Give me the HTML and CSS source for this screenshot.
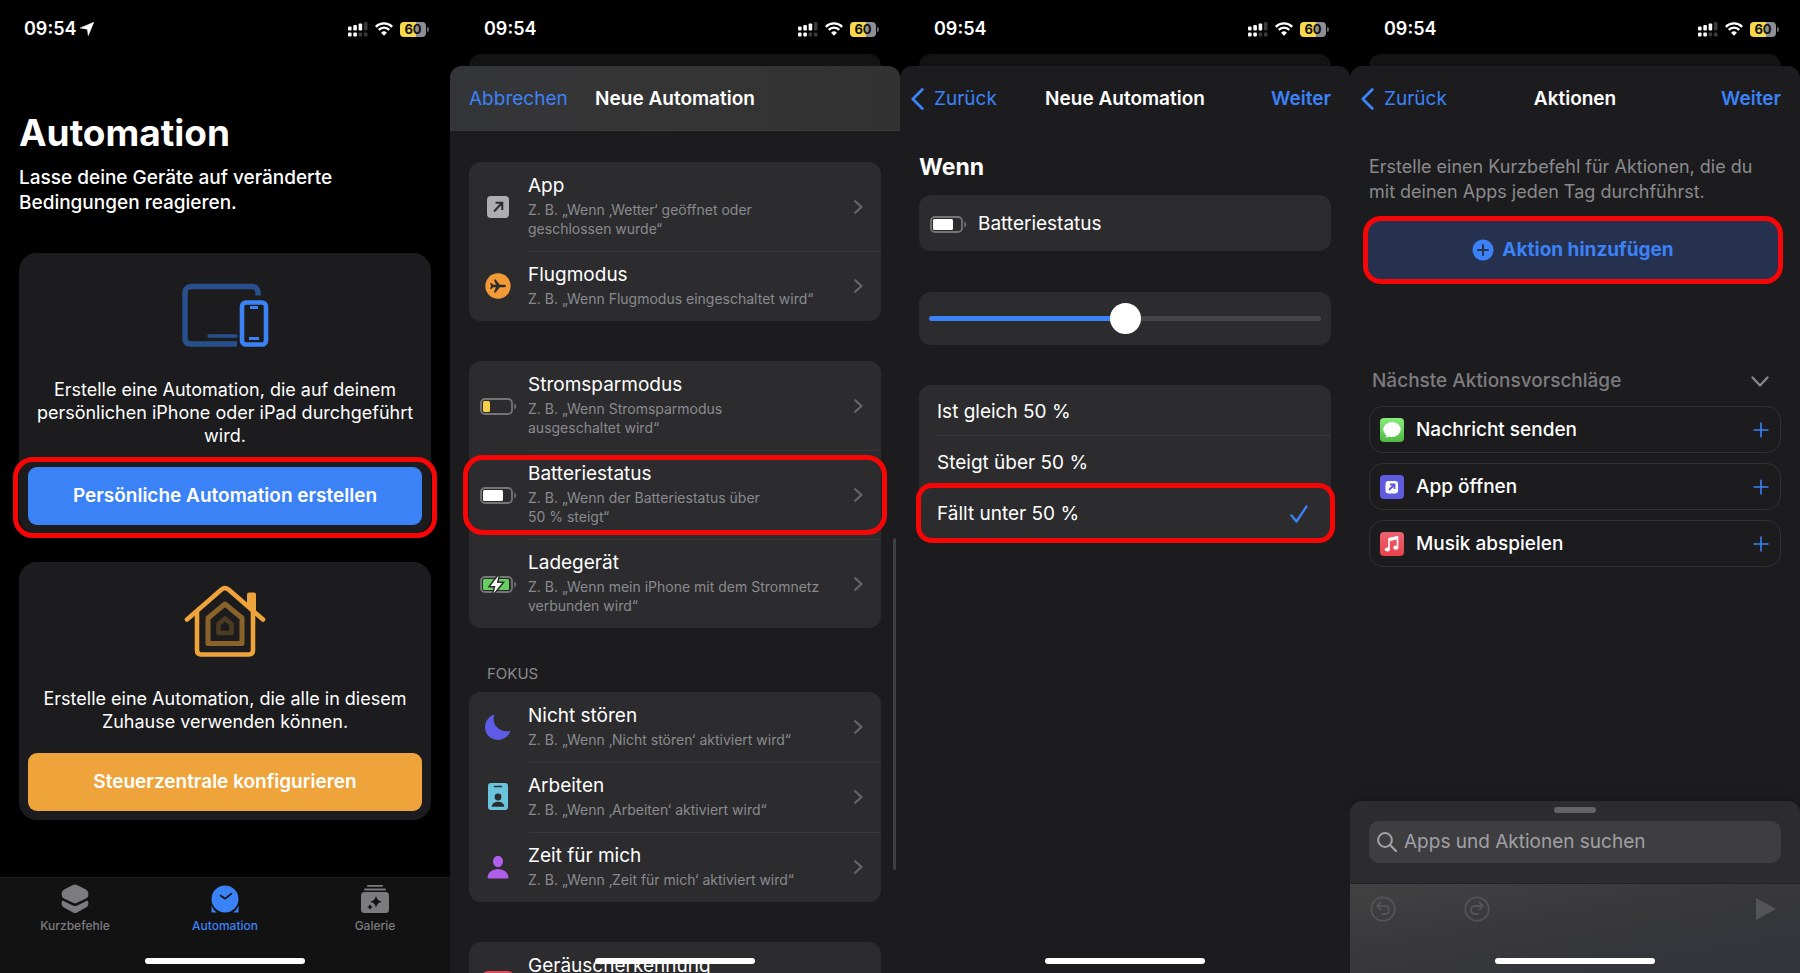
FILE: index.html
```
<!DOCTYPE html>
<html lang="de">
<head>
    <meta charset="UTF-8">
    <meta name="viewport" content="width=device-width, initial-scale=1.0">
    <title>Automation</title>
    <link rel="stylesheet" href="styles.css">
</head>
<body>
    <!-- shared icons -->
    <svg class="defs" aria-hidden="true">
        <symbol id="i-signal" viewBox="0 0 20 15">
            <g fill="#fff">
                <rect x="0" y="4.500" width="3.600" height="4" rx="1"/>
                <rect x="5.300" y="3" width="3.600" height="5.500" rx="1"/>
                <rect x="10.600" y="1.500" width="3.600" height="7" rx="1"/>
                <rect x="0" y="10.500" width="3.600" height="4" rx="1"/>
                <rect x="5.300" y="10.500" width="3.600" height="4" rx="1"/>
            </g>
            <g fill="#3a3a3c">
                <rect x="15.900" y="0" width="3.600" height="8.500" rx="1"/>
                <rect x="10.600" y="10.500" width="3.600" height="4" rx="1"/>
                <rect x="15.900" y="10.500" width="3.600" height="4" rx="1"/>
            </g>
        </symbol>
        <symbol id="i-wifi" viewBox="0 0 18 14">
            <path d="M.8 4.800A11.600 11.600 0 0 1 17.200 4.800" fill="none" stroke="#fff" stroke-width="2.400"/>
            <path d="M3.700 7.900A7.500 7.500 0 0 1 14.300 7.900" fill="none" stroke="#fff" stroke-width="2.300"/>
            <path d="M9 13.800L6.100 10.800a4.100 4.100 0 0 1 5.800 0z" fill="#fff"/>
        </symbol>
        <symbol id="i-chevron" viewBox="0 0 9 14">
            <path d="M1.200 1.200L7.500 7l-6.300 5.800" fill="none" stroke="currentColor" stroke-width="2.200" stroke-linecap="round" stroke-linejoin="round"/>
        </symbol>
        <symbol id="i-back" viewBox="0 0 13 22">
            <path d="M11.300 1.600L1.800 11l9.500 9.400" fill="none" stroke="currentColor" stroke-width="2.800" stroke-linecap="round" stroke-linejoin="round"/>
        </symbol>
        <symbol id="i-battery" viewBox="0 0 37 17">
            <rect x="1" y="1" width="31" height="15" rx="4" fill="none" stroke="#757578" stroke-width="1.800"/>
            <path d="M34.300 5.500c2.400.8 2.400 5.200 0 6z" fill="#757578"/>
        </symbol>
        <symbol id="i-plus" viewBox="0 0 16 16">
            <path d="M8 .5v15M.5 8h15" fill="none" stroke="currentColor" stroke-width="1.600"/>
        </symbol>
    </svg>

    <main class="screens">
        <!-- Automation overview -->
        <section class="screen">
            <div class="status status-home">
                <span class="time">09:54</span>
                <svg class="location" viewBox="0 0 14 14"><path d="M13.800.2L8.300 13.600 7.300 7.200.2 6z" fill="#fff" stroke="#fff" stroke-width=".5" stroke-linejoin="round"/></svg>
                <div class="indicators">
                    <svg class="signal"><use href="#i-signal"/></svg>
                    <svg class="wifi"><use href="#i-wifi"/></svg>
                    <span class="level">60</span>
                </div>
            </div>
            <div class="overview">
                <h1>Automation</h1>
                <p class="lead">Lasse deine Geräte auf veränderte<br>Bedingungen reagieren.</p>
                <article class="card">
                    <svg class="card-icon" viewBox="0 0 88 80">
                        <path d="M77 22.500v-3a6 6 0 0 0-6-6H10a6 6 0 0 0-6 6v45.500q0 6 6 6h46" fill="none" stroke="#28508c" stroke-width="5.500"/>
                        <path d="M28 63h27" stroke="#28508c" stroke-width="3.500" stroke-linecap="round"/>
                        <rect x="61" y="29.500" width="24" height="42" rx="4" fill="none" stroke="#3b82f7" stroke-width="4.600"/>
                        <path d="M69 34.500h8M68 65.500h10" stroke="#3b82f7" stroke-width="2.800"/>
                    </svg>
                    <p>Erstelle eine Automation, die auf deinem<br>persönlichen iPhone oder iPad durchgeführt<br>wird.</p>
                    <button type="button" class="big blue marked">Persönliche Automation erstellen</button>
                </article>
                <article class="card">
                    <svg class="card-icon" viewBox="0 0 88 80">
                        <g fill="none" stroke-linejoin="round" stroke-linecap="round">
                            <path d="M6 37.500L40.500 7.500Q44 4.800 47.500 7.500L82 37.500" stroke="#efa33b" stroke-width="4.600"/>
                            <path d="M16 30v38q0 4.500 4 4.500h48q4 0 4-4.500V30" stroke="#efa33b" stroke-width="4.600"/>
                            <path d="M44 22L27 36v25.500h34V36z" stroke="#8a632a" stroke-width="5"/>
                            <path d="M44 36.500l-6.500 5.500V51h13V42z" stroke="#4d3b21" stroke-width="4.600"/>
                        </g>
                        <path d="M66 12.500q0-2 2-2h5q2 0 2 2V34L66 26z" fill="#efa33b"/>
                    </svg>
                    <p>Erstelle eine Automation, die alle in diesem<br>Zuhause verwenden können.</p>
                    <button type="button" class="big orange">Steuerzentrale konfigurieren</button>
                </article>
            </div>
            <nav class="tabs">
                <a href="#kurzbefehle">
                    <svg viewBox="0 0 30 30" fill="currentColor"><path d="M13 1Q15 0 17 1l9 4.500q2.500 1.500 2.500 4.500t-2.500 4.500l-9 4.200q-2 1-4 0l-9-4.200Q1.500 13 1.500 10T4 5.500z"/><path d="M2.600 16.500l9.600 4.700q2.800 1.400 5.600 0l9.600-4.700q1.600 1.800.9 4.300-.5 1.700-2.300 2.700l-9 5q-2 1-4 0l-9-5q-1.800-1-2.300-2.700-.7-2.500.9-4.300z"/></svg>
                    Kurzbefehle
                </a>
                <a href="#automation" class="active">
                    <svg viewBox="0 0 30 30" fill="currentColor"><circle cx="15" cy="15" r="13.500"/><path d="M1.500 21.500q1.500 4.500 5.500 7H1.500zM28.500 21.500q-1.500 4.500-5.500 7h5.500z"/><path d="M10.500 11.500l4.500 3.200 6.500-5" fill="none" stroke="#121212" stroke-width="1.600" stroke-linecap="round"/></svg>
                    Automation
                </a>
                <a href="#galerie">
                    <svg viewBox="0 0 30 30" fill="currentColor"><rect x="7" y="1" width="16" height="1.800" rx=".9"/><rect x="4" y="4.500" width="22" height="2" rx="1"/><rect x="1" y="8" width="28" height="21" rx="3.500"/><path d="M16 11.500q.8 5.500 6 6.300-5.200.8-6 6.300-.8-5.500-6-6.300 5.200-.8 6-6.300zM10 20q.4 2.600 2.800 3-2.400.4-2.800 3-.4-2.600-2.800-3 2.400-.4 2.800-3z" fill="#121212"/></svg>
                    Galerie
                </a>
            </nav>
            <div class="home-bar"></div>
        </section>

        <!-- Trigger list -->
        <section class="screen modal">
            <div class="status">
                <span class="time">09:54</span>
                <div class="indicators">
                    <svg class="signal"><use href="#i-signal"/></svg>
                    <svg class="wifi"><use href="#i-wifi"/></svg>
                    <span class="level">60</span>
                </div>
            </div>
            <div class="sheet">
                <header class="navbar raised">
                    <a href="#abbrechen">Abbrechen</a>
                    <h2>Neue Automation</h2>
                </header>
                <div class="triggers">
                    <ul class="group">
                        <li><a href="#app" class="row">
                            <svg class="icon" viewBox="0 0 38 28"><rect x="8" y="3" width="22" height="22" rx="4" fill="#aeaeb2"/><path d="M15 18.500l8-8.500M16.500 9.700H23.300V17" fill="none" stroke="#2c2c2e" stroke-width="2"/></svg>
                            <span class="texts"><b>App</b><small>Z. B. „Wenn ‚Wetter‘ geöffnet oder<br>geschlossen wurde“</small></span>
                            <svg class="chevron"><use href="#i-chevron"/></svg>
                        </a></li>
                        <li><a href="#flugmodus" class="row">
                            <svg class="icon" viewBox="0 0 38 28"><circle cx="19" cy="14" r="12.700" fill="#f19a37"/><path d="M27 14q0-1.200-2.200-1.200h-4L16.600 7.500h-1.700l2 5.300h-2.700L12.300 11h-1.200L12 14l-.9 3h1.200l1.900-1.800h2.700l-2 5.300h1.700l4.200-5.300h4Q27 15.200 27 14z" fill="#2c2c2e"/></svg>
                            <span class="texts"><b>Flugmodus</b><small>Z. B. „Wenn Flugmodus eingeschaltet wird“</small></span>
                            <svg class="chevron"><use href="#i-chevron"/></svg>
                        </a></li>
                    </ul>
                    <ul class="group">
                        <li><a href="#stromsparmodus" class="row">
                            <svg class="icon" viewBox="0 0 38 28"><use href="#i-battery" x="1" y="6" width="37" height="17"/><rect x="4" y="9" width="7" height="11" rx="1.500" fill="#f7ce46"/></svg>
                            <span class="texts"><b>Stromsparmodus</b><small>Z. B. „Wenn Stromsparmodus<br>ausgeschaltet wird“</small></span>
                            <svg class="chevron"><use href="#i-chevron"/></svg>
                        </a></li>
                        <li><a href="#batteriestatus" class="row marked">
                            <svg class="icon" viewBox="0 0 38 28"><use href="#i-battery" x="1" y="6" width="37" height="17"/><rect x="4" y="9" width="20" height="11" rx="1.500" fill="#fff"/></svg>
                            <span class="texts"><b>Batteriestatus</b><small>Z. B. „Wenn der Batteriestatus über<br>50 % steigt“</small></span>
                            <svg class="chevron"><use href="#i-chevron"/></svg>
                        </a></li>
                        <li><a href="#ladegeraet" class="row">
                            <svg class="icon" viewBox="0 0 38 28"><use href="#i-battery" x="1" y="6" width="37" height="17"/><rect x="4" y="9" width="26" height="11" rx="1.500" fill="#65cf60"/><path d="M19.500 5.500L11.500 16h5l-2 7.500 8.500-10.500h-5.200z" fill="#fff" stroke="#2c2c2e" stroke-width="3" paint-order="stroke"/></svg>
                            <span class="texts"><b>Ladegerät</b><small>Z. B. „Wenn mein iPhone mit dem Stromnetz<br>verbunden wird“</small></span>
                            <svg class="chevron"><use href="#i-chevron"/></svg>
                        </a></li>
                    </ul>
                    <h3>FOKUS</h3>
                    <ul class="group">
                        <li><a href="#nicht-stoeren" class="row">
                            <svg class="icon" viewBox="0 0 38 28"><path d="M15.500 1.500A13 13 0 1 0 31.500 17.500 12.500 12.500 0 0 1 15.500 1.500z" fill="#5e5ce6"/></svg>
                            <span class="texts"><b>Nicht stören</b><small>Z. B. „Wenn ‚Nicht stören‘ aktiviert wird“</small></span>
                            <svg class="chevron"><use href="#i-chevron"/></svg>
                        </a></li>
                        <li><a href="#arbeiten" class="row">
                            <svg class="icon" viewBox="0 0 38 28"><rect x="9" y="0" width="20" height="27" rx="3" fill="#6ac4dc"/><path d="M15.500 3.500h7" stroke="#2c2c2e" stroke-width="1.600" stroke-linecap="round"/><circle cx="19" cy="14" r="3.400" fill="#2c2c2e"/><path d="M12.500 23.800q1-5 6.500-5t6.500 5z" fill="#2c2c2e"/></svg>
                            <span class="texts"><b>Arbeiten</b><small>Z. B. „Wenn ‚Arbeiten‘ aktiviert wird“</small></span>
                            <svg class="chevron"><use href="#i-chevron"/></svg>
                        </a></li>
                        <li><a href="#zeit-fuer-mich" class="row">
                            <svg class="icon" viewBox="0 0 38 28"><ellipse cx="19" cy="8.500" rx="5" ry="5.700" fill="#af5fe9"/><path d="M8.500 24q0-3 3-5.500t7.500-2.500 7.500 2.500 3 5.500q0 1.500-1.500 1.500h-18q-1.500 0-1.500-1.500z" fill="#af5fe9"/></svg>
                            <span class="texts"><b>Zeit für mich</b><small>Z. B. „Wenn ‚Zeit für mich‘ aktiviert wird“</small></span>
                            <svg class="chevron"><use href="#i-chevron"/></svg>
                        </a></li>
                    </ul>
                    <ul class="group">
                        <li><a href="#geraeuscherkennung" class="row tall">
                            <svg class="icon" viewBox="0 0 38 28"><rect x="3" y="-2" width="32" height="32" rx="6" fill="#ea445a"/></svg>
                            <span class="texts"><b>Geräuscherkennung</b></span>
                            <svg class="chevron"><use href="#i-chevron"/></svg>
                        </a></li>
                    </ul>
                </div>
            </div>
            <div class="scrollbar"></div>
            <div class="home-bar"></div>
        </section>

        <!-- Battery condition -->
        <section class="screen modal">
            <div class="status">
                <span class="time">09:54</span>
                <div class="indicators">
                    <svg class="signal"><use href="#i-signal"/></svg>
                    <svg class="wifi"><use href="#i-wifi"/></svg>
                    <span class="level">60</span>
                </div>
            </div>
            <div class="sheet">
                <header class="navbar">
                    <a href="#zurueck" class="back"><svg><use href="#i-back"/></svg>Zurück</a>
                    <h2>Neue Automation</h2>
                    <a href="#weiter" class="next">Weiter</a>
                </header>
                <form class="condition">
                    <h1>Wenn</h1>
                    <div class="group current">
                        <svg class="icon" viewBox="0 0 38 28"><use href="#i-battery" x="1" y="6" width="37" height="17"/><rect x="4" y="9" width="20" height="11" rx="1.500" fill="#fff"/></svg>
                        Batteriestatus
                    </div>
                    <div class="group slider">
                        <input type="range" min="0" max="100" value="50" aria-label="Batteriestatus">
                    </div>
                    <div class="group options">
                        <label><input type="radio" name="when">Ist gleich 50 %</label>
                        <label><input type="radio" name="when">Steigt über 50 %</label>
                        <label class="marked"><input type="radio" name="when" checked>Fällt unter 50 %
                            <svg class="check" viewBox="0 0 18 18"><path d="M1.500 10.500l5 6L16.500 1.500" fill="none" stroke="currentColor" stroke-width="2.300" stroke-linecap="round" stroke-linejoin="round"/></svg>
                        </label>
                    </div>
                </form>
            </div>
            <div class="home-bar"></div>
        </section>

        <!-- Actions -->
        <section class="screen modal">
            <div class="status">
                <span class="time">09:54</span>
                <div class="indicators">
                    <svg class="signal"><use href="#i-signal"/></svg>
                    <svg class="wifi"><use href="#i-wifi"/></svg>
                    <span class="level">60</span>
                </div>
            </div>
            <div class="sheet">
                <header class="navbar">
                    <a href="#zurueck" class="back"><svg><use href="#i-back"/></svg>Zurück</a>
                    <h2>Aktionen</h2>
                    <a href="#weiter" class="next">Weiter</a>
                </header>
                <div class="actions">
                    <p>Erstelle einen Kurzbefehl für Aktionen, die du<br>mit deinen Apps jeden Tag durchführst.</p>
                    <button type="button" class="add">
                        <svg viewBox="0 0 22 22"><circle cx="11" cy="11" r="10.500" fill="currentColor"/><path d="M11 6v10M6 11h10" stroke="#26314f" stroke-width="2" stroke-linecap="round"/></svg>
                        Aktion hinzufügen
                    </button>
                    <div class="suggest-head">
                        <h3>Nächste Aktionsvorschläge</h3>
                        <svg viewBox="0 0 18 11"><path d="M1.500 1.500L9 9.500l7.500-8" fill="none" stroke="currentColor" stroke-width="2.200" stroke-linecap="round" stroke-linejoin="round"/></svg>
                    </div>
                    <button type="button" class="suggestion">
                        <svg class="app" viewBox="0 0 24 24">
                            <defs><linearGradient id="g-msg" x2="0" y2="1"><stop stop-color="#86ee78"/><stop offset="1" stop-color="#51b845"/></linearGradient></defs>
                            <rect width="24" height="24" rx="4" fill="url(#g-msg)"/><ellipse cx="12" cy="11.500" rx="8.700" ry="7.500" fill="#fff"/><path d="M6.500 15.500q.5 2.500-1 4 3 0 5-2z" fill="#fff"/>
                        </svg>
                        Nachricht senden
                        <svg class="plus"><use href="#i-plus"/></svg>
                    </button>
                    <button type="button" class="suggestion">
                        <svg class="app" viewBox="0 0 24 24"><rect width="24" height="24" rx="4" fill="#5e5bdd"/><rect x="5.500" y="6" width="12.500" height="12.500" rx="3" fill="#fff"/><path d="M9 15l5-5M10 9.500h4.500V14" fill="none" stroke="#5e5bdd" stroke-width="1.900"/></svg>
                        App öffnen
                        <svg class="plus"><use href="#i-plus"/></svg>
                    </button>
                    <button type="button" class="suggestion">
                        <svg class="app" viewBox="0 0 24 24">
                            <defs><linearGradient id="g-music" x2="0" y2="1"><stop stop-color="#ec6373"/><stop offset="1" stop-color="#e8424c"/></linearGradient></defs>
                            <rect width="24" height="24" rx="4" fill="url(#g-music)"/><path d="M9 17V7l8.500-2v10.500" fill="none" stroke="#fff" stroke-width="1.600"/><path d="M9 6l8.500-2v3.300L9 9.300z" fill="#fff"/><ellipse cx="7.300" cy="17.500" rx="2.600" ry="2.100" fill="#fff"/><ellipse cx="15.800" cy="15.700" rx="2.600" ry="2.100" fill="#fff"/>
                        </svg>
                        Musik abspielen
                        <svg class="plus"><use href="#i-plus"/></svg>
                    </button>
                </div>
                <footer class="drawer">
                    <div class="grabber"></div>
                    <label class="search">
                        <svg viewBox="0 0 20 20"><circle cx="8" cy="8" r="6.900" fill="none" stroke="currentColor" stroke-width="2"/><path d="M13 13l6 6" stroke="currentColor" stroke-width="2.300" stroke-linecap="round"/></svg>
                        <input type="search" placeholder="Apps und Aktionen suchen" aria-label="Apps und Aktionen suchen">
                    </label>
                    <div class="toolbar">
                        <button type="button" aria-label="Widerrufen"><svg viewBox="0 0 26 26" fill="none" stroke="currentColor" stroke-width="1.800"><circle cx="13" cy="13" r="11.700"/><path d="M10.500 6.500L7 10l3.500 3.500M7.500 10H15q4 0 4 4t-4 4h-3" stroke-linecap="round" stroke-linejoin="round"/></svg></button>
                        <button type="button" aria-label="Wiederholen"><svg viewBox="0 0 26 26" fill="none" stroke="currentColor" stroke-width="1.800"><circle cx="13" cy="13" r="11.700"/><path d="M15.500 6.500L19 10l-3.500 3.500M18.500 10H11q-4 0-4 4t4 4h3" stroke-linecap="round" stroke-linejoin="round"/></svg></button>
                        <button type="button" class="play" aria-label="Ausführen"><svg viewBox="0 0 20 26"><path d="M0 2v22l20-11z" fill="currentColor"/></svg></button>
                    </div>
                </footer>
            </div>
            <div class="home-bar"></div>
        </section>
    </main>
</body>
</html>
```

FILE: styles.css
```
* {
    box-sizing: border-box;
    margin: 0;
    padding: 0;
}
body {
    background-color: #000;
    color: #fff;
    font-family: Inter, "Liberation Sans", sans-serif;
    font-size: 19px;
    line-height: 24px;
}
a {
    color: #3b82f7;
    text-decoration: none;
}
button, input {
    font: inherit;
    color: inherit;
    border: none;
    background: none;
}
ul {
    list-style: none;
}
.defs {
    position: absolute;
    width: 0;
    height: 0;
}
.screens {
    display: grid;
    grid-template-columns: repeat(4, 1fr);
    height: 100vh;
}
.screen {
    position: relative;
    display: flex;
    flex-direction: column;
    min-width: 0;
    min-height: 0;
    overflow: hidden;
}

/* status bar */
.status {
    display: flex;
    align-items: center;
    flex: none;
    height: 54px;
    padding: 4px 21px 0 34px;
}
.status-home {
    padding-left: 24px;
}
.time {
    font-size: 18px;
    font-weight: 600;
}
.location {
    width: 14px;
    height: 14px;
    margin-left: 4px;
}
.indicators {
    display: flex;
    align-items: center;
    gap: 7px;
    margin-left: auto;
}
.signal {
    width: 20px;
    height: 15px;
}
.wifi {
    width: 18px;
    height: 14px;
}
.level {
    position: relative;
    width: 26px;
    margin-right: 3px;
    border-radius: 4px;
    background: linear-gradient(90deg, #f7d94c 60%, #8e8e93 60%);
    color: #111;
    font-size: 13px;
    font-weight: 700;
    line-height: 15px;
    text-align: center;
}
.level::after {
    content: "";
    position: absolute;
    left: 27px;
    top: 5px;
    width: 2px;
    height: 5px;
    border-radius: 0 2px 2px 0;
    background: #6c6c70;
}
.home-bar {
    position: absolute;
    left: 50%;
    bottom: 9px;
    width: 160px;
    height: 6px;
    margin-left: -80px;
    border-radius: 3px;
    background: #fff;
}

/* red frame round the control to tap */
.marked {
    position: relative;
}
.marked::after {
    content: "";
    position: absolute;
    border: 5px solid #f60606;
    border-radius: 20px;
    pointer-events: none;
}
.big.marked::after {
    inset: -10px -15px -13px;
}
.row.marked::after {
    inset: 5px -6px 4px;
    z-index: 1;
}
.options .marked::after {
    inset: -4px -4px -5px -3px;
    border-radius: 16px;
}

/* overview */
.overview {
    flex: 1;
    padding: 57px 19px 0;
}
.overview h1 {
    font-size: 37px;
    line-height: 44px;
}
.lead {
    margin: 10px 0 38px;
    font-size: 19px;
    font-weight: 500;
    line-height: 25px;
}
.card {
    display: flex;
    flex-direction: column;
    align-items: center;
    margin-bottom: 28px;
    padding: 20px 9px 9px;
    border-radius: 18px;
    background: #1c1c1e;
    text-align: center;
}
.card-icon {
    width: 88px;
    height: 80px;
    margin-bottom: 25px;
}
.card p {
    font-size: 18px;
    line-height: 23px;
    white-space: nowrap;
}
.big {
    align-self: stretch;
    height: 58px;
    margin-top: 20px;
    border-radius: 9px;
    font-weight: 600;
}
.blue {
    background: #3b82f7;
}
.orange {
    background: #efa33b;
}
.tabs {
    display: flex;
    flex: none;
    height: 96px;
    padding-top: 6px;
    border-top: 1px solid #1f1f20;
    background: #121212;
}
.tabs a {
    display: flex;
    flex: 1;
    flex-direction: column;
    align-items: center;
    color: #7c7c80;
    font-size: 12px;
    font-weight: 500;
    line-height: 24px;
}
.tabs a.active {
    color: #3b82f7;
}
.tabs svg {
    width: 30px;
    height: 30px;
}

/* modal sheets */
.modal::before {
    content: "";
    position: absolute;
    top: 54px;
    left: 19px;
    right: 19px;
    height: 30px;
    border-radius: 12px;
    background: #131314;
}
.sheet {
    position: relative;
    display: flex;
    flex: 1;
    flex-direction: column;
    min-height: 0;
    margin-top: 12px;
    border-radius: 12px 12px 0 0;
    background: #1c1c1e;
    overflow: hidden;
}
.navbar {
    display: grid;
    grid-template-columns: 1fr auto 1fr;
    align-items: center;
    flex: none;
    height: 65px;
    padding: 0 19px;
}
.raised {
    background: linear-gradient(90deg, #343538, #353536 30%, #323233);
    box-shadow: inset 0 -1px #3a3a3b;
}
.navbar h2 {
    font-size: 19px;
    font-weight: 600;
}
.next {
    justify-self: end;
    font-weight: 600;
}
.back {
    display: flex;
    align-items: center;
    gap: 10px;
    margin-left: -8px;
}
.back svg {
    width: 13px;
    height: 22px;
}
.group {
    border-radius: 12px;
    background: #2c2c2e;
}
.icon {
    flex: none;
    width: 38px;
    height: 28px;
    overflow: visible;
}

/* trigger list */
.triggers {
    padding: 31px 19px 0;
}
.triggers .group {
    margin-bottom: 40px;
}
.triggers h3 {
    margin: -6px 18px 6px;
    color: #8a8a8e;
    font-size: 15px;
    font-weight: 400;
}
.row {
    display: flex;
    align-items: center;
    padding: 0 18px 0 10px;
    color: #fff;
}
.tall {
    min-height: 89px;
}
.texts {
    display: flex;
    flex: 1;
    flex-direction: column;
    align-self: flex-start;
    gap: 2px;
    margin-left: 11px;
    padding: 12px 0 13px;
    white-space: nowrap;
}
.texts b {
    font-weight: 400;
}
.texts small {
    color: #8a8a8e;
    font-size: 14px;
    line-height: 19px;
}
.group li + li {
    background: linear-gradient(#38383a, #38383a) 60px 0 / 100% 1px no-repeat;
}
.chevron {
    width: 9px;
    height: 14px;
    color: #66666a;
}
.scrollbar {
    position: absolute;
    top: 538px;
    right: 4px;
    width: 3px;
    height: 332px;
    border-radius: 2px;
    background: #3f3f41;
}

/* condition form */
.condition {
    padding: 21px 19px 0;
}
.condition h1 {
    margin-bottom: 13px;
    font-size: 23px;
    line-height: 30px;
}
.current {
    display: flex;
    align-items: center;
    gap: 11px;
    height: 56px;
    padding: 2px 10px 0;
}
.slider {
    display: flex;
    align-items: center;
    height: 53px;
    margin: 41px 0 40px;
    padding: 0 10px;
}
.slider input {
    width: 100%;
    height: 31px;
    appearance: none;
}
.slider input::-webkit-slider-runnable-track {
    height: 5px;
    border-radius: 3px;
    background: linear-gradient(90deg, #3b82f7 50%, #464648 50%);
}
.slider input::-webkit-slider-thumb {
    width: 31px;
    height: 31px;
    margin-top: -13px;
    border-radius: 50%;
    background: #fff;
    appearance: none;
}
.options label {
    display: flex;
    align-items: center;
    height: 51px;
    padding: 2px 23px 0 18px;
    background: linear-gradient(#38383a, #38383a) 18px 100% / 100% 1px no-repeat;
}
.options label:last-child {
    background: none;
}
.options input {
    width: 0;
    height: 0;
    appearance: none;
}
.check {
    width: 18px;
    height: 18px;
    margin-left: auto;
    color: #3b82f7;
}

/* actions */
.actions {
    flex: 1;
    padding: 23px 19px 0;
}
.actions p {
    color: #8a8a8e;
    font-size: 18px;
    line-height: 25px;
    white-space: nowrap;
}
.add {
    display: flex;
    align-items: center;
    justify-content: center;
    gap: 8px;
    width: calc(100% + 8px);
    height: 68px;
    margin: 12px 0 85px -6px;
    border: 5px solid #f60606;
    border-radius: 18px;
    background: #26314f;
    color: #3b82f7;
    font-weight: 700;
}
.add svg {
    width: 22px;
    height: 22px;
}
.suggest-head {
    display: flex;
    align-items: center;
    justify-content: space-between;
    margin-bottom: 13px;
    padding: 0 12px 0 3px;
    color: #7c7c80;
}
.suggest-head h3 {
    font-size: 19px;
    font-weight: 500;
}
.suggest-head svg {
    width: 18px;
    height: 11px;
    color: #8a8a8e;
}
.suggestion {
    display: flex;
    align-items: center;
    gap: 12px;
    width: 100%;
    height: 47px;
    margin-bottom: 10px;
    padding: 0 11px 0 10px;
    border: 1px solid #323234;
    border-radius: 14px;
    font-weight: 500;
}
.app {
    width: 24px;
    height: 24px;
}
.plus {
    width: 16px;
    height: 16px;
    margin-left: auto;
    color: #3b82f7;
}
.drawer {
    flex: none;
    border-radius: 12px 12px 0 0;
    background: #2c2c2e;
    box-shadow: 0 0 12px rgba(0, 0, 0, 0.3);
    overflow: hidden;
}
.grabber {
    width: 42px;
    height: 6px;
    margin: 6px auto 8px;
    border-radius: 3px;
    background: #636367;
}
.search {
    display: flex;
    align-items: center;
    gap: 7px;
    height: 42px;
    margin: 0 19px 20px;
    padding: 0 8px;
    border-radius: 10px;
    background: #3e3e40;
    color: #a0a0a6;
}
.search svg {
    width: 20px;
    height: 20px;
}
.search input {
    flex: 1;
    min-width: 0;
    outline: none;
}
.search input::placeholder {
    color: #a0a0a6;
}
.toolbar {
    display: flex;
    align-items: flex-start;
    gap: 68px;
    height: 90px;
    padding: 12px 24px 0 20px;
    border-top: 1px solid #222224;
    background: linear-gradient(170deg, #424243, #38383a 45%, #32343b 90%);
    color: #545456;
}
.toolbar svg {
    display: block;
    width: 26px;
    height: 26px;
}
.toolbar .play {
    margin-left: auto;
}
.toolbar .play svg {
    width: 20px;
}
```
